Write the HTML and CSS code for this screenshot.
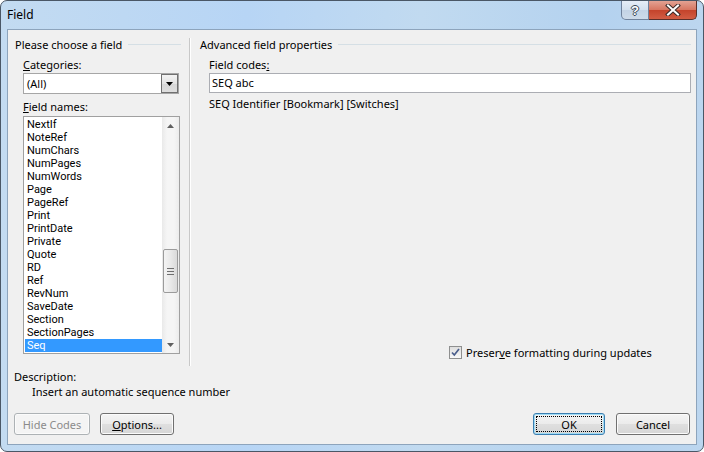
FILE: index.html
```html
<!DOCTYPE html>
<html lang="en">
<head>
    <meta charset="UTF-8">
    <title>Field</title>
    <link rel="stylesheet" href="styles.css">
</head>
<body>
    <div class="window">
        <!-- Title bar with caption buttons -->
        <div class="titlebar">
            <span class="title">Field</span>
            <div class="caption">
                <div class="cap help">?</div>
                <div class="cap close">
                    <svg width="16" height="12" viewBox="0 0 16 12">
                        <path d="M3 1.5 L13 10.5 M13 1.5 L3 10.5" stroke="#3a2a28" stroke-width="4" stroke-linecap="square"/>
                        <path d="M3 1.5 L13 10.5 M13 1.5 L3 10.5" stroke="#fff" stroke-width="2" stroke-linecap="square"/>
                    </svg>
                </div>
            </div>
        </div>

        <div class="client">
            <div class="main">
                <!-- Left: choose a field -->
                <div class="left">
                    <div class="group-head"><span>Please choose a field</span></div>
                    <div class="field-label"><u>C</u>ategories:</div>
                    <div class="combo">
                        <span class="combo-value">(All)</span>
                        <span class="drop">
                            <svg width="7" height="4" viewBox="0 0 7 4"><path d="M0 0 H7 L3.5 4 Z" fill="#000"/></svg>
                        </span>
                    </div>
                    <div class="field-label"><u>F</u>ield names:</div>
                    <div class="listbox">
                        <ul class="items">
                            <li>NextIf</li>
                            <li>NoteRef</li>
                            <li>NumChars</li>
                            <li>NumPages</li>
                            <li>NumWords</li>
                            <li>Page</li>
                            <li>PageRef</li>
                            <li>Print</li>
                            <li>PrintDate</li>
                            <li>Private</li>
                            <li>Quote</li>
                            <li>RD</li>
                            <li>Ref</li>
                            <li>RevNum</li>
                            <li>SaveDate</li>
                            <li>Section</li>
                            <li>SectionPages</li>
                            <li class="selected">Seq</li>
                        </ul>
                        <div class="scrollbar">
                            <div class="arrow">
                                <svg width="7" height="4" viewBox="0 0 7 4"><path d="M0 4 H7 L3.5 0 Z" fill="#606060"/></svg>
                            </div>
                            <div class="track">
                                <div class="thumb"><span class="grip"></span></div>
                            </div>
                            <div class="arrow">
                                <svg width="7" height="4" viewBox="0 0 7 4"><path d="M0 0 H7 L3.5 4 Z" fill="#606060"/></svg>
                            </div>
                        </div>
                    </div>
                </div>

                <div class="divider"></div>

                <!-- Right: advanced properties -->
                <div class="right">
                    <div class="group-head"><span>Advanced field properties</span></div>
                    <div class="field-label">Field codes<u>:</u></div>
                    <div class="textbox">SEQ abc</div>
                    <div class="syntax">SEQ Identifier [Bookmark] [Switches]</div>
                    <label class="check">
                        <span class="box">
                            <svg width="11" height="11" viewBox="0 0 11 11"><path d="M2 5.5 L4.3 8 L9 2" fill="none" stroke="#4a5e8c" stroke-width="1.7"/></svg>
                        </span>
                        Preser<u>v</u>e formatting during updates
                    </label>
                </div>
            </div>

            <div class="desc-label">Description:</div>
            <div class="desc-text">Insert an automatic sequence number</div>

            <div class="buttons">
                <div class="btn disabled hide">Hide Codes</div>
                <div class="btn options"><u>O</u>ptions...</div>
                <div class="btn default ok">OK</div>
                <div class="btn cancel">Cancel</div>
            </div>
        </div>
    </div>
</body>
</html>
```

FILE: styles.css
```css
* {
    box-sizing: border-box;
}

body {
    margin: 0;
    background-color: #fff;
    font-family: "Noto Sans", sans-serif;
    font-size: 11px;
    color: #000;
}

.window {
    width: 704px;
    height: 452px;
    border: 1px solid #4a5766;
    border-radius: 7px;
    padding: 0 6px 6px;
    display: flex;
    flex-direction: column;
    background: linear-gradient(to right, #c3dbf1, #b7d5f5 35%, #c1daf0 60%, #b4d2ef 85%, #bcd6ef);
}

.titlebar {
    height: 28px;
    display: flex;
    align-items: flex-start;
}

.title {
    margin-top: 6px;
    font-size: 12px;
    line-height: 15px;
}

.caption {
    margin-left: auto;
    display: flex;
}

.cap {
    height: 19px;
    display: flex;
    align-items: center;
    justify-content: center;
}

.help {
    width: 28px;
    border: 1px solid #6f829c;
    border-top: none;
    border-radius: 0 0 0 5px;
    background: linear-gradient(#e6eef7, #d3e0ee 50%, #c3d3e5 51%, #cddbea);
    color: #fff;
    font-family: "Liberation Sans", sans-serif;
    font-size: 13px;
    font-weight: bold;
    line-height: 15px;
    text-shadow: 1px 0 #3a4756, -1px 0 #3a4756, 0 1px #3a4756, 0 -1px #3a4756;
}

.close {
    width: 48px;
    border: 1px solid #5a2f2a;
    border-top: none;
    border-left: none;
    border-radius: 0 0 5px 0;
    background: linear-gradient(#e3a293, #d67560 50%, #c4432b 51%, #d25d44);
}

.client {
    flex: 1;
    border: 1px solid #8da4bc;
    background-color: #f0f0f0;
    padding-top: 7px;
    display: flex;
    flex-direction: column;
}

.main {
    height: 329px;
    display: flex;
}

.left {
    width: 166px;
    margin-left: 7px;
}

.divider {
    width: 1px;
    margin: 1px 0 0 8px;
    background-color: #c8c8c8;
    box-shadow: 1px 0 0 #fff;
}

.right {
    flex: 1;
    padding-left: 10px;
    margin-right: 5px;
    display: flex;
    flex-direction: column;
}

.group-head {
    display: flex;
    align-items: center;
    line-height: 15px;
    height: 15px;
}

.group-head::after {
    content: "";
    flex: 1;
    height: 1px;
    margin-left: 6px;
    background-color: #d5dfe5;
}

.field-label {
    margin: 5px 0 0 8px;
    line-height: 15px;
}

.right .field-label {
    margin-left: 9px;
}

.combo {
    margin: 1px 0 0 8px;
    width: 156px;
    height: 21px;
    border: 1px solid #a6a6a6;
    background-color: #fff;
    display: flex;
    align-items: center;
}

.combo-value {
    padding-left: 3px;
}

.drop {
    margin-left: auto;
    width: 17px;
    height: 19px;
    border: 1px solid #707070;
    background: linear-gradient(#f3f3f3, #e3e3e3 50%, #d6d6d6 51%, #dedede);
    display: flex;
    align-items: center;
    justify-content: center;
}

.listbox {
    margin: 2px 0 0 8px;
    width: 157px;
    height: 238px;
    border: 1px solid #a0a0a0;
    background-color: #fff;
    display: flex;
}

.items {
    flex: 1;
    list-style: none;
    margin: 0;
    padding: 1px 0 0 1px;
    font-family: Roboto, "Noto Sans", sans-serif;
    font-size: 11px;
}

.items li {
    line-height: 13px;
    height: 13px;
    padding-left: 2px;
}

.items li.selected {
    background-color: #3399ff;
    color: #fff;
}

.scrollbar {
    width: 17px;
    display: flex;
    flex-direction: column;
    background: linear-gradient(to right, #e9e9e9, #f5f5f5 30%, #f5f5f5 70%, #ececec);
}

.arrow {
    height: 17px;
    display: flex;
    align-items: center;
    justify-content: center;
}

.track {
    flex: 1;
}

.thumb {
    margin: 115px 1px 0 1px;
    height: 44px;
    border: 1px solid #9b9b9b;
    border-radius: 2px;
    background: linear-gradient(to right, #f4f4f4, #e9e9e9 50%, #dadada);
    display: flex;
    align-items: center;
    justify-content: center;
}

.grip {
    width: 7px;
    height: 7px;
    background: linear-gradient(#6e6e6e 0 1px, transparent 1px 3px, #6e6e6e 3px 4px, transparent 4px 6px, #6e6e6e 6px 7px);
}

.textbox {
    margin: 1px 0 0 9px;
    height: 20px;
    border: 1px solid #abadb3;
    background-color: #fff;
    padding-left: 2px;
    line-height: 18px;
}

.syntax {
    margin: 3px 0 0 9px;
    line-height: 15px;
}

.check {
    margin: auto 0 6px 249px;
    display: flex;
    align-items: center;
    line-height: 15px;
    height: 15px;
}

.box {
    width: 13px;
    height: 13px;
    margin-right: 4px;
    border: 1px solid #8e8f8f;
    background: linear-gradient(#dedede, #f8f8f8);
    display: flex;
}

.desc-label {
    margin: 3px 0 0 6px;
    line-height: 15px;
}

.desc-text {
    margin-left: 24px;
    line-height: 15px;
}

.buttons {
    margin-top: 14px;
    padding: 0 6px;
    display: flex;
}

.btn {
    height: 22px;
    border: 1px solid #707070;
    border-radius: 3px;
    background: linear-gradient(#f4f4f4, #ebebeb 50%, #dfdfdf 51%, #d6d6d6);
    box-shadow: inset 0 0 0 1px #fbfbfb;
    display: flex;
    align-items: center;
    justify-content: center;
    position: relative;
}

.btn.disabled {
    border-color: #adb2b5;
    background: #f4f4f4;
    color: #8b8b8b;
}

.hide {
    width: 76px;
}

.options {
    width: 74px;
    margin-left: 10px;
}

.ok {
    width: 72px;
    margin-left: auto;
}

.cancel {
    width: 74px;
    margin-left: 11px;
}

.btn.default {
    border-color: #3c7fb1;
    box-shadow: inset 0 0 0 1px #9fdcf6;
}

.btn.default::after {
    content: "";
    position: absolute;
    inset: 2px;
    border: 1px dotted #000;
}
```
